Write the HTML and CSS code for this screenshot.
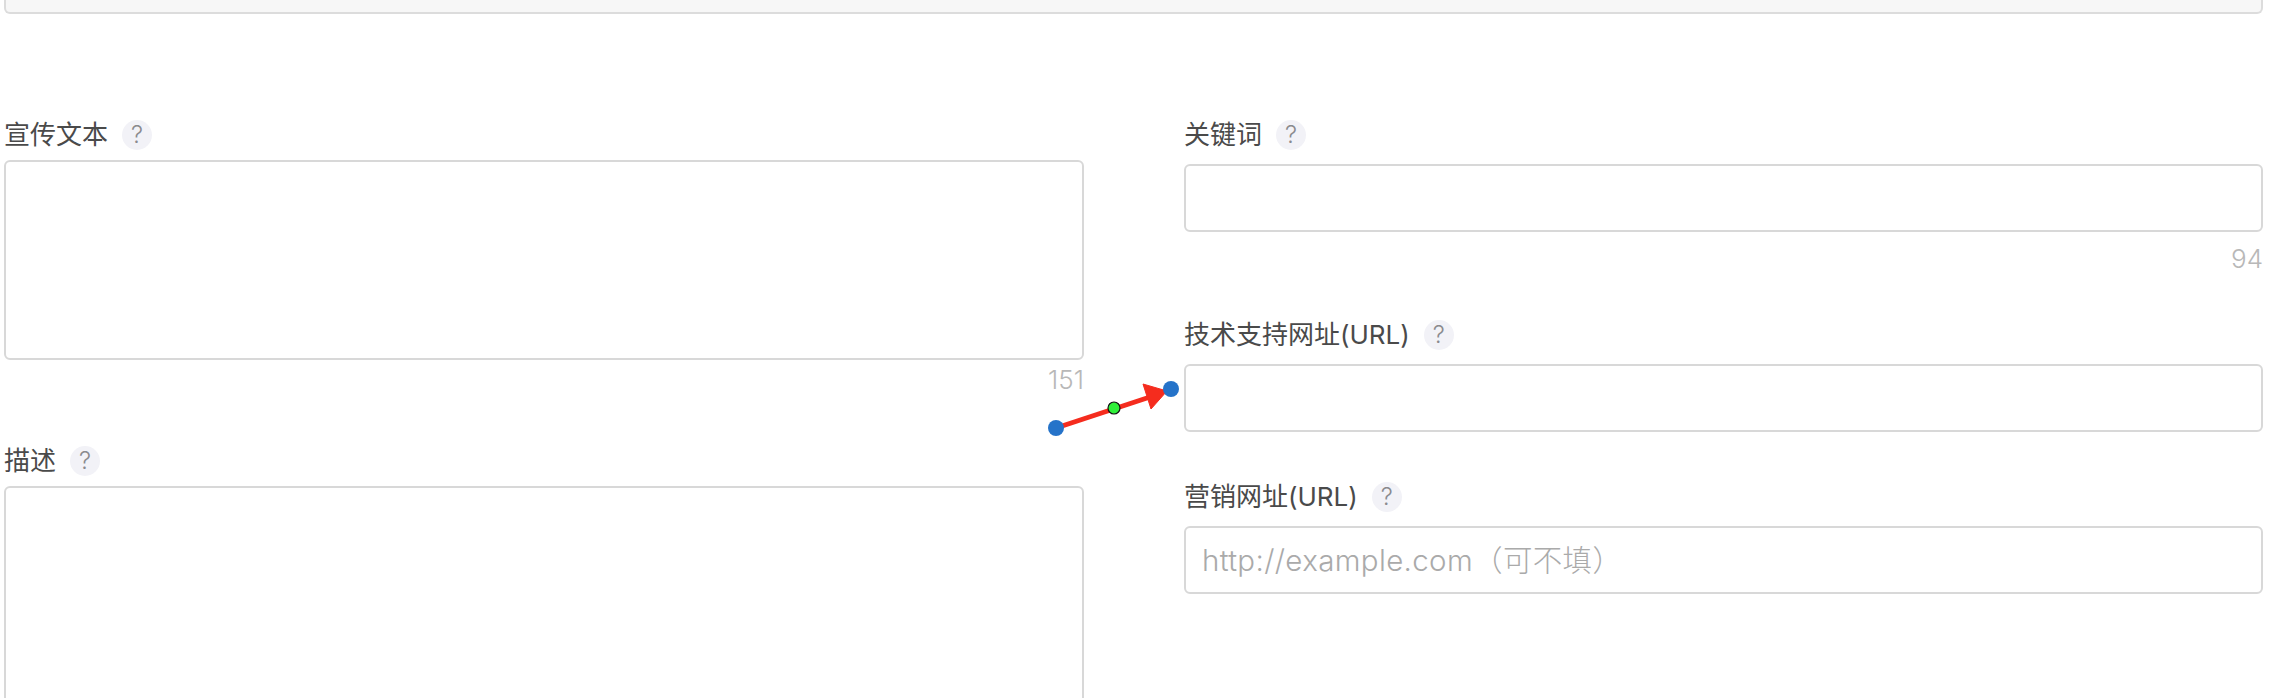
FILE: index.html
```html
<!DOCTYPE html>
<html lang="zh-CN">
<head>
  <meta charset="UTF-8">
  <title>App Information</title>
  <link rel="stylesheet" href="styles.css">
</head>
<body>

  <div class="top-box"></div>

  <div class="form-grid">
    <div class="column">
      <div class="label-row"><span class="label">宣传文本</span><span class="help">?</span></div>
      <textarea class="promo"></textarea>
      <div class="count">151</div>
      <div class="label-row desc-label"><span class="label">描述</span><span class="help">?</span></div>
      <textarea class="desc"></textarea>
    </div>

    <div class="column right">
      <div class="label-row"><span class="label">关键词</span><span class="help">?</span></div>
      <input class="text-input" type="text">
      <div class="count">94</div>
      <div class="label-row support-label"><span class="label">技术支持网址(URL)</span><span class="help">?</span></div>
      <input class="text-input" type="text">
      <div class="label-row market-label"><span class="label">营销网址(URL)</span><span class="help">?</span></div>
      <input class="text-input" type="text" placeholder="http://example.com（可不填）">
    </div>
  </div>

  <!-- annotation drawn over the form -->
  <svg class="arrow" width="2274" height="698" viewBox="0 0 2274 698">
    <line x1="1056" y1="428" x2="1150" y2="397" stroke="#f52c1e" stroke-width="5"/>
    <polygon points="1143,384 1167,391 1151,409" fill="#f52c1e" stroke="#f52c1e" stroke-width="1"/>
    <circle cx="1056" cy="428" r="8" fill="#2573c9"/>
    <circle cx="1171" cy="389" r="8" fill="#2573c9"/>
    <circle cx="1114" cy="408" r="6" fill="#2ff03a" stroke="#111" stroke-width="1.2"/>
  </svg>

</body>
</html>
```

FILE: styles.css
```css
html, body {
  height: 698px;
  overflow: hidden;
}

body {
  margin: 0;
  padding: 0 11px 0 4px;
  background: #fff;
  font-family: Inter, "Noto Sans CJK SC", sans-serif;
  box-sizing: border-box;
}

.top-box {
  height: 14px;
  box-sizing: border-box;
  background: #f7f7f7;
  border: 2px solid #dcdcdc;
  border-top: none;
  border-radius: 0 0 6px 6px;
}

.form-grid {
  display: grid;
  grid-template-columns: 1080px 1079px;
  column-gap: 100px;
  margin-top: 105px;
}

.label-row {
  display: flex;
  align-items: center;
  height: 32px;
  margin-bottom: 9px;
}

.label {
  font-size: 26px;
  color: #4a4a4a;
  line-height: 32px;
}

.help {
  width: 30px;
  height: 30px;
  margin-left: 14px;
  border-radius: 50%;
  background: #f2f2f7;
  color: #8a8a8e;
  font-size: 24px;
  font-weight: 300;
  line-height: 30px;
  text-align: center;
}

textarea, .text-input {
  display: block;
  width: 100%;
  box-sizing: border-box;
  margin: 0;
  padding: 0 16px;
  background: #fff;
  border: 2px solid #d8d8d8;
  border-radius: 6px;
  outline: none;
  resize: none;
  font-family: Inter, "Noto Sans CJK SC", sans-serif;
  font-size: 29.5px;
  font-weight: 300;
  letter-spacing: 0.35px;
}

.text-input::placeholder {
  color: #aaa;
}

.promo {
  height: 200px;
}

.desc {
  height: 300px;
}

.text-input {
  height: 68px;
}

.count {
  height: 38px;
  line-height: 40px;
  text-align: right;
  font-size: 26px;
  font-weight: 300;
  color: #b8b8b8;
}

.desc-label {
  margin-top: 47px;
  margin-bottom: 9px;
}

.right .label-row {
  margin-bottom: 13px;
}

.right .count {
  margin-top: 7px;
}

.right .support-label {
  margin-top: 42px;
}

.right .market-label {
  margin-top: 49px;
}

.arrow {
  position: absolute;
  top: 0;
  left: 0;
}
```
